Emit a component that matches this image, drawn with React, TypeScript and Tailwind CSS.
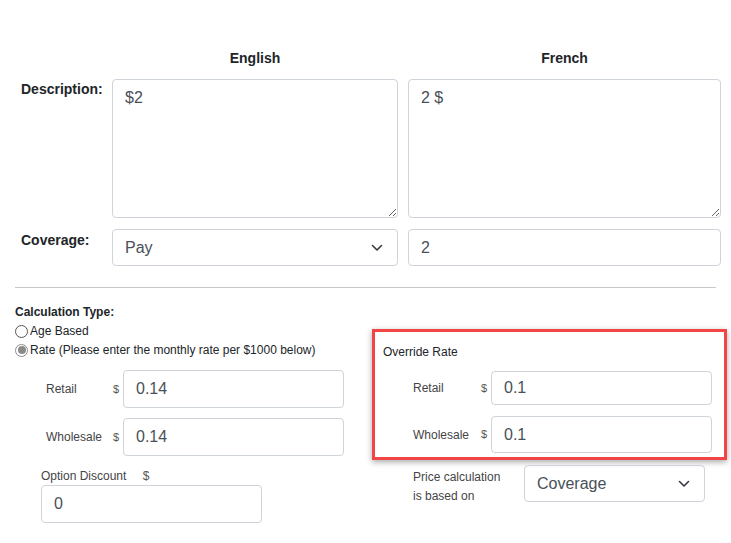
import React from "react";

function Chevron() {
  return (
    <svg width="12" height="8" viewBox="0 0 12 8" className="text-[#343a40]">
      <path d="M1.5 1.5 L6 6 L10.5 1.5" fill="none" stroke="currentColor" strokeWidth="1.6" strokeLinecap="round" strokeLinejoin="round" />
    </svg>
  );
}

function Radio({ checked }: { checked?: boolean }) {
  if (checked) {
    return (
      <span className="w-[13px] h-[13px] rounded-full border border-[#8d8d8d] bg-white flex items-center justify-center mr-[2px]">
        <span className="w-[8px] h-[8px] rounded-full bg-[#8a8a8a]" />
      </span>
    );
  }
  return <span className="w-[13px] h-[13px] rounded-full border border-[#555] bg-white mr-[2px]" />;
}

function TextBox({ value, className }: { value: string; className: string }) {
  return (
    <input
      readOnly
      defaultValue={value}
      className={`border border-[#ced4da] rounded-[4px] px-[12px] text-[16px] text-[#495057] bg-white outline-none ${className}`}
    />
  );
}

function RateRow({ label, value, labelW, inputW, h }: { label: string; value: string; labelW: string; inputW: string; h: string }) {
  return (
    <div className="flex items-center">
      <span className={`text-[12px] text-[#444] ${labelW}`}>{label}</span>
      <span className="text-[11px] text-[#555] w-[10px]">$</span>
      <TextBox value={value} className={`${inputW} ${h}`} />
    </div>
  );
}

export default function App() {
  return (
    <div className="w-[731px] h-[543px] bg-white overflow-hidden font-['Liberation_Sans',Arial,sans-serif] text-[#212529]">
      {/* language headings */}
      <div className="flex mt-[50px] text-[14px] font-bold leading-[16px]">
        <div className="w-[112px]" />
        <div className="w-[286px] text-center">English</div>
        <div className="w-[313px] ml-[10px] text-center">French</div>
      </div>

      {/* description */}
      <div className="flex mt-[13px]">
        <div className="w-[112px] pl-[21px] pt-[2px] text-[14px] leading-[16px] font-bold">Description:</div>
        <textarea
          readOnly
          defaultValue="$2"
          className="w-[286px] h-[139px] border border-[#ced4da] rounded-[4px] px-[12px] py-[6px] text-[16px] leading-[24px] text-[#495057] outline-none"
        />
        <textarea
          readOnly
          defaultValue="2 $"
          className="w-[313px] h-[139px] ml-[10px] border border-[#ced4da] rounded-[4px] px-[12px] py-[6px] text-[16px] leading-[24px] text-[#495057] outline-none"
        />
      </div>

      {/* coverage */}
      <div className="flex mt-[11px]">
        <div className="w-[112px] pl-[21px] pt-[3px] text-[14px] leading-[16px] font-bold">Coverage:</div>
        <div className="w-[286px] h-[37px] border border-[#ced4da] rounded-[4px] pl-[12px] pr-[14px] flex items-center justify-between text-[16px] text-[#495057]">
          <span>Pay</span>
          <Chevron />
        </div>
        <TextBox value="2" className="w-[313px] h-[37px] ml-[10px]" />
      </div>

      <div className="mt-[21px] mx-[15px] border-t border-[#c8c8c8]" />

      {/* calculation section */}
      <div className="flex mt-[17px]">
        <div className="w-[372px] pl-[15px]">
          <div className="text-[12px] font-bold leading-[14px]">Calculation Type:</div>
          <div className="flex items-center text-[12px] leading-[18px] mt-[3px]">
            <Radio />
            Age Based
          </div>
          <div className="flex items-center text-[12px] leading-[18px] mt-[1px]">
            <Radio checked />
            Rate (Please enter the monthly rate per $1000 below)
          </div>
          <div className="pl-[31px] mt-[11px] flex flex-col gap-[10px]">
            <RateRow label="Retail" value="0.14" labelW="w-[67px]" inputW="w-[221px]" h="h-[38px]" />
            <RateRow label="Wholesale" value="0.14" labelW="w-[67px]" inputW="w-[221px]" h="h-[38px]" />
          </div>
          <div className="pl-[26px] mt-[13px] text-[12px] text-[#444] leading-[14px]">
            Option Discount <span className="ml-[13px] text-[#555]">$</span>
          </div>
          <TextBox value="0" className="w-[221px] h-[38px] ml-[26px] mt-[2px]" />
        </div>

        <div className="w-[355px]">
          <div className="mt-[24px] border-[3px] border-[#f24545] shadow-[0_2px_6px_rgba(0,0,0,0.35)] h-[131px] pl-[8px] pt-[13px]">
            <div className="text-[12px] leading-[14px]">Override Rate</div>
            <div className="pl-[30px] mt-[12px] flex flex-col gap-[11px]">
              <RateRow label="Retail" value="0.1" labelW="w-[68px]" inputW="w-[221px]" h="h-[34px]" />
              <RateRow label="Wholesale" value="0.1" labelW="w-[68px]" inputW="w-[221px]" h="h-[37px]" />
            </div>
          </div>
          <div className="flex mt-[5px] pl-[41px]">
            <div className="w-[111px] text-[12px] text-[#444] leading-[19px] pt-[3px]">
              Price calculation
              <br />
              is based on
            </div>
            <div className="w-[181px] h-[37px] border border-[#ced4da] rounded-[4px] pl-[12px] pr-[14px] flex items-center justify-between text-[16px] text-[#495057]">
              <span>Coverage</span>
              <Chevron />
            </div>
          </div>
        </div>
      </div>
    </div>
  );
}
